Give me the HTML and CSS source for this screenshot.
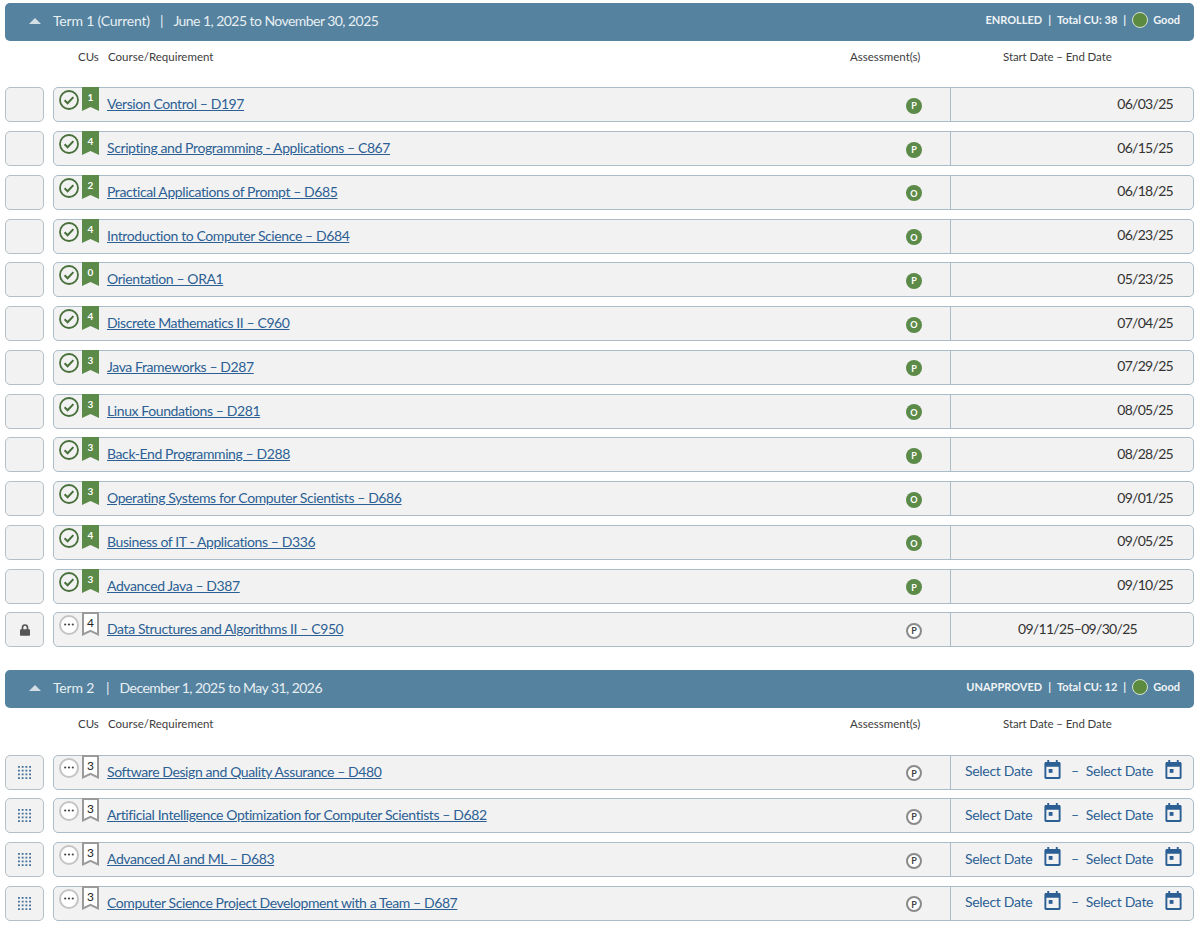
FILE: index.html
```html
<!DOCTYPE html>
<html lang="en">

<head>
	<meta charset="utf-8">
	<title>Degree Plan</title>
	<link rel="stylesheet" href="styles.css">
</head>

<body>
	<svg class="defs" width="0" height="0">
		<symbol id="check" viewBox="0 0 20 20">
			<circle cx="10" cy="10" r="9" fill="none" stroke="#47703a" stroke-width="1.8" />
			<path d="M5.600 10.300l3 3 5.800-6.200" fill="none" stroke="#47703a" stroke-width="2" />
		</symbol>
		<symbol id="dots" viewBox="0 0 20 20">
			<circle cx="10" cy="10" r="9" fill="#fff" stroke="#c4c4c4" stroke-width="2" />
			<circle cx="6.200" cy="9.500" r="1.100" fill="#444" />
			<circle cx="10" cy="9.500" r="1.100" fill="#444" />
			<circle cx="13.800" cy="9.500" r="1.100" fill="#444" />
		</symbol>
		<symbol id="mark-done" viewBox="0 0 17 24">
			<path d="M0 0h17v24l-8.500-4L0 24z" fill="#5c8a48" />
		</symbol>
		<symbol id="mark-open" viewBox="0 0 17 24">
			<path d="M1 1h15v21.400l-7.500-3.500L1 22.400z" fill="#fff" stroke="#9a9a9a" stroke-width="2" />
		</symbol>
		<symbol id="lock" viewBox="0 0 12 14">
			<path d="M2 6V4a4 4 0 0 1 8 0v2h.6c.8 0 1.400.6 1.400 1.400v5.200c0 .8-.6 1.400-1.400 1.400H1.400C.6 14 0 13.400 0 12.600V7.400C0 6.600.6 6 1.400 6zm2 0h4V4a2 2 0 0 0-4 0z" fill="#555" />
		</symbol>
		<symbol id="grip" viewBox="0 0 14 14">
			<path d="M0 0h2v2H0zM4 0h2v2H4zM8 0h2v2H8zM12 0h2v2h-2zM0 4h2v2H0zM4 4h2v2H4zM8 4h2v2H8zM12 4h2v2h-2zM0 8h2v2H0zM4 8h2v2H4zM8 8h2v2H8zM12 8h2v2h-2zM0 12h2v2H0zM4 12h2v2H4zM8 12h2v2H8zM12 12h2v2h-2z" fill="#446f9b" />
		</symbol>
		<symbol id="cal" viewBox="0 0 17 20">
			<path d="M3 0h2v2h7V0h2v2h1.500c.8 0 1.500.7 1.500 1.500v15c0 .8-.7 1.500-1.500 1.500h-14C.7 20 0 19.300 0 18.500v-15C0 2.700.7 2 1.500 2H3zM2 7v11h13V7z" fill="#2c5f94" />
			<path d="M4.500 9.500h4v4h-4z" fill="#2c5f94" />
		</symbol>
	</svg>

	<section class="term">
		<header class="termBar">
			<span class="caret"></span>
			<span class="termName">Term 1 (Current)</span>
			<span class="sep">|</span>
			<span class="termDates">June 1, 2025 to November 30, 2025</span>
			<div class="termInfo">
				<span>ENROLLED</span><span class="pipe">|</span><span>Total CU: 38</span><span class="pipe">|</span>
				<span class="dot"></span><span>Good</span>
			</div>
		</header>
		<div class="colHeads">
			<span class="colCu">CUs</span>
			<span class="colCourse">Course/Requirement</span>
			<span class="colAssess">Assessment(s)</span>
			<span class="colDate">Start Date – End Date</span>
		</div>
		<div class="rows">
			<div class="row">
				<div class="handle"></div>
				<div class="course">
					<svg class="status"><use href="#check" /></svg>
					<div class="cu done"><svg><use href="#mark-done" /></svg><b>1</b></div>
					<a class="name" href="#">Version Control – D197</a>
					<span class="badge">P</span>
					<div class="date">06/03/25</div>
				</div>
			</div>
			<div class="row">
				<div class="handle"></div>
				<div class="course">
					<svg class="status"><use href="#check" /></svg>
					<div class="cu done"><svg><use href="#mark-done" /></svg><b>4</b></div>
					<a class="name" href="#">Scripting and Programming - Applications – C867</a>
					<span class="badge">P</span>
					<div class="date">06/15/25</div>
				</div>
			</div>
			<div class="row">
				<div class="handle"></div>
				<div class="course">
					<svg class="status"><use href="#check" /></svg>
					<div class="cu done"><svg><use href="#mark-done" /></svg><b>2</b></div>
					<a class="name" href="#">Practical Applications of Prompt – D685</a>
					<span class="badge">O</span>
					<div class="date">06/18/25</div>
				</div>
			</div>
			<div class="row">
				<div class="handle"></div>
				<div class="course">
					<svg class="status"><use href="#check" /></svg>
					<div class="cu done"><svg><use href="#mark-done" /></svg><b>4</b></div>
					<a class="name" href="#">Introduction to Computer Science – D684</a>
					<span class="badge">O</span>
					<div class="date">06/23/25</div>
				</div>
			</div>
			<div class="row">
				<div class="handle"></div>
				<div class="course">
					<svg class="status"><use href="#check" /></svg>
					<div class="cu done"><svg><use href="#mark-done" /></svg><b>0</b></div>
					<a class="name" href="#">Orientation – ORA1</a>
					<span class="badge">P</span>
					<div class="date">05/23/25</div>
				</div>
			</div>
			<div class="row">
				<div class="handle"></div>
				<div class="course">
					<svg class="status"><use href="#check" /></svg>
					<div class="cu done"><svg><use href="#mark-done" /></svg><b>4</b></div>
					<a class="name" href="#">Discrete Mathematics II – C960</a>
					<span class="badge">O</span>
					<div class="date">07/04/25</div>
				</div>
			</div>
			<div class="row">
				<div class="handle"></div>
				<div class="course">
					<svg class="status"><use href="#check" /></svg>
					<div class="cu done"><svg><use href="#mark-done" /></svg><b>3</b></div>
					<a class="name" href="#">Java Frameworks – D287</a>
					<span class="badge">P</span>
					<div class="date">07/29/25</div>
				</div>
			</div>
			<div class="row">
				<div class="handle"></div>
				<div class="course">
					<svg class="status"><use href="#check" /></svg>
					<div class="cu done"><svg><use href="#mark-done" /></svg><b>3</b></div>
					<a class="name" href="#">Linux Foundations – D281</a>
					<span class="badge">O</span>
					<div class="date">08/05/25</div>
				</div>
			</div>
			<div class="row">
				<div class="handle"></div>
				<div class="course">
					<svg class="status"><use href="#check" /></svg>
					<div class="cu done"><svg><use href="#mark-done" /></svg><b>3</b></div>
					<a class="name" href="#">Back-End Programming – D288</a>
					<span class="badge">P</span>
					<div class="date">08/28/25</div>
				</div>
			</div>
			<div class="row">
				<div class="handle"></div>
				<div class="course">
					<svg class="status"><use href="#check" /></svg>
					<div class="cu done"><svg><use href="#mark-done" /></svg><b>3</b></div>
					<a class="name" href="#">Operating Systems for Computer Scientists – D686</a>
					<span class="badge">O</span>
					<div class="date">09/01/25</div>
				</div>
			</div>
			<div class="row">
				<div class="handle"></div>
				<div class="course">
					<svg class="status"><use href="#check" /></svg>
					<div class="cu done"><svg><use href="#mark-done" /></svg><b>4</b></div>
					<a class="name" href="#">Business of IT - Applications – D336</a>
					<span class="badge">O</span>
					<div class="date">09/05/25</div>
				</div>
			</div>
			<div class="row">
				<div class="handle"></div>
				<div class="course">
					<svg class="status"><use href="#check" /></svg>
					<div class="cu done"><svg><use href="#mark-done" /></svg><b>3</b></div>
					<a class="name" href="#">Advanced Java – D387</a>
					<span class="badge">P</span>
					<div class="date">09/10/25</div>
				</div>
			</div>
			<div class="row">
				<div class="handle"><svg class="lockIcon"><use href="#lock" /></svg></div>
				<div class="course">
					<svg class="status"><use href="#dots" /></svg>
					<div class="cu"><svg><use href="#mark-open" /></svg><b>4</b></div>
					<a class="name" href="#">Data Structures and Algorithms II – C950</a>
					<span class="badge open">P</span>
					<div class="date range">09/11/25–09/30/25</div>
				</div>
			</div>
		</div>
	</section>

	<section class="term">
		<header class="termBar">
			<span class="caret"></span>
			<span class="termName">Term 2</span>
			<span class="sep wide">|</span>
			<span class="termDates">December 1, 2025 to May 31, 2026</span>
			<div class="termInfo">
				<span>UNAPPROVED</span><span class="pipe">|</span><span>Total CU: 12</span><span class="pipe">|</span>
				<span class="dot"></span><span>Good</span>
			</div>
		</header>
		<div class="colHeads">
			<span class="colCu">CUs</span>
			<span class="colCourse">Course/Requirement</span>
			<span class="colAssess">Assessment(s)</span>
			<span class="colDate">Start Date – End Date</span>
		</div>
		<div class="rows">
			<div class="row">
				<div class="handle"><svg class="gripIcon"><use href="#grip" /></svg></div>
				<div class="course">
					<svg class="status"><use href="#dots" /></svg>
					<div class="cu"><svg><use href="#mark-open" /></svg><b>3</b></div>
					<a class="name" href="#">Software Design and Quality Assurance – D480</a>
					<span class="badge open">P</span>
					<div class="date pick">
						<span class="pickText">Select Date</span><svg class="calIcon"><use href="#cal" /></svg>
						<span class="dash">–</span>
						<span class="pickText">Select Date</span><svg class="calIcon"><use href="#cal" /></svg>
					</div>
				</div>
			</div>
			<div class="row">
				<div class="handle"><svg class="gripIcon"><use href="#grip" /></svg></div>
				<div class="course">
					<svg class="status"><use href="#dots" /></svg>
					<div class="cu"><svg><use href="#mark-open" /></svg><b>3</b></div>
					<a class="name" href="#">Artificial Intelligence Optimization for Computer Scientists – D682</a>
					<span class="badge open">P</span>
					<div class="date pick">
						<span class="pickText">Select Date</span><svg class="calIcon"><use href="#cal" /></svg>
						<span class="dash">–</span>
						<span class="pickText">Select Date</span><svg class="calIcon"><use href="#cal" /></svg>
					</div>
				</div>
			</div>
			<div class="row">
				<div class="handle"><svg class="gripIcon"><use href="#grip" /></svg></div>
				<div class="course">
					<svg class="status"><use href="#dots" /></svg>
					<div class="cu"><svg><use href="#mark-open" /></svg><b>3</b></div>
					<a class="name" href="#">Advanced AI and ML – D683</a>
					<span class="badge open">P</span>
					<div class="date pick">
						<span class="pickText">Select Date</span><svg class="calIcon"><use href="#cal" /></svg>
						<span class="dash">–</span>
						<span class="pickText">Select Date</span><svg class="calIcon"><use href="#cal" /></svg>
					</div>
				</div>
			</div>
			<div class="row">
				<div class="handle"><svg class="gripIcon"><use href="#grip" /></svg></div>
				<div class="course">
					<svg class="status"><use href="#dots" /></svg>
					<div class="cu"><svg><use href="#mark-open" /></svg><b>3</b></div>
					<a class="name" href="#">Computer Science Project Development with a Team – D687</a>
					<span class="badge open">P</span>
					<div class="date pick">
						<span class="pickText">Select Date</span><svg class="calIcon"><use href="#cal" /></svg>
						<span class="dash">–</span>
						<span class="pickText">Select Date</span><svg class="calIcon"><use href="#cal" /></svg>
					</div>
				</div>
			</div>
		</div>
	</section>
</body>

</html>
```

FILE: styles.css
```css
* {
	margin: 0;
	padding: 0;
	box-sizing: border-box;
}

body {
	padding: 3px 6px 0 5px;
	background: #fff;
	color: #333;
	font-family: Lato, "Open Sans", sans-serif;
	overflow: hidden;
}

.defs {
	position: absolute;
}

.term {
	margin-bottom: 23px;
}

.termBar {
	height: 38px;
	padding: 0 14px 3px 24px;
	display: flex;
	align-items: center;
	background: #54829f;
	border-radius: 5px;
	color: #e8eff3;
	font-size: 14px;
}

.caret {
	width: 0;
	height: 0;
	margin-right: 12px;
	border-left: 6.500px solid transparent;
	border-right: 6.500px solid transparent;
	border-bottom: 6.500px solid #d3dee5;
}

.termName {
	letter-spacing: -0.200px;
}

.termDates {
	letter-spacing: -0.550px;
}

.sep {
	margin: 0 10px;
}

.sep.wide {
	margin: 0 10px 0 12px;
}

.termInfo {
	margin: 0 0 2px auto;
	display: flex;
	align-items: center;
	color: #f0f4f7;
	font-size: 11px;
	font-weight: 700;
}

.pipe {
	margin: 0 6px;
	font-weight: 700;
}

.dot {
	width: 16px;
	height: 16px;
	margin-right: 5px;
	background: #5c8a3e;
	border: 1px solid #d5e2d2;
	border-radius: 50%;
}

.colHeads {
	height: 46.300px;
	padding-bottom: 16px;
	display: flex;
	align-items: center;
	color: #3d3d3d;
	font-size: 11.500px;
}

.colCu {
	width: 103px;
	padding-left: 73px;
}

.colCourse {
	width: 742px;
}

.colAssess {
	width: 153px;
}

.colDate {
	letter-spacing: -0.100px;
}

.rows {
	display: flex;
	flex-direction: column;
	gap: 8.750px;
}

.row {
	height: 35px;
	display: grid;
	grid-template-columns: 39px 1fr;
	gap: 9px;
}

.handle {
	display: flex;
	align-items: center;
	justify-content: center;
	background: #f2f2f2;
	border: 1px solid #b5c0c6;
	border-radius: 5px;
}

.lockIcon {
	width: 10px;
	height: 12px;
}

.gripIcon {
	width: 13px;
	height: 13px;
}

.course {
	position: relative;
	display: flex;
	align-items: center;
	background: #f2f2f2;
	border: 1px solid #a9bcc8;
	border-radius: 5px;
}

.status {
	width: 20px;
	height: 20px;
	margin: 0 3px 9px 5px;
	flex: none;
}

.cu {
	width: 17px;
	height: 24px;
	margin: -1px 0 auto;
	position: relative;
	flex: none;
	text-align: center;
}

.cu svg {
	width: 17px;
	height: 24px;
	position: absolute;
	top: 0;
	left: 0;
}

.cu b {
	position: relative;
	display: block;
	padding-top: 3px;
	color: #222;
	font-size: 12px;
	font-weight: 400;
}

.cu.done b {
	padding-top: 4px;
	color: #fff;
	font-size: 10px;
	font-weight: 700;
}

.name {
	margin: 0 0 2px 8px;
	color: #2c5f94;
	font-size: 14px;
	letter-spacing: -0.400px;
}

.badge {
	width: 16px;
	height: 16px;
	margin: 2px 28px 0 auto;
	display: flex;
	align-items: center;
	justify-content: center;
	flex: none;
	background: #5c8a48;
	border-radius: 50%;
	color: #fff;
	font-size: 9px;
	font-weight: 700;
}

.badge.open {
	background: #fff;
	border: 2px solid #8a8a8a;
	color: #444;
}

.date {
	width: 243px;
	height: 100%;
	padding: 0 20px 3px 0;
	display: flex;
	align-items: center;
	justify-content: flex-end;
	flex: none;
	border-left: 1px solid #a9bcc8;
	color: #333;
	font-size: 14px;
	letter-spacing: -0.700px;
}

.date.range {
	padding: 0 0 3px 11px;
	justify-content: center;
}

.date.pick {
	padding: 0 0 3px 14px;
	justify-content: flex-start;
	color: #2c5f94;
	letter-spacing: -0.300px;
}

.pickText {
	width: 66px;
	white-space: nowrap;
}

.calIcon {
	width: 17px;
	height: 19px;
	margin: 0 10px 3px 13px;
	flex: none;
}

.dash {
	margin-right: 7px;
}
```
